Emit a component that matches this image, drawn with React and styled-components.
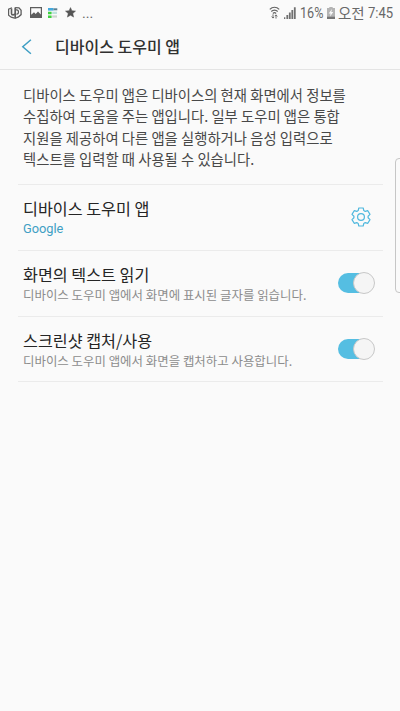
import React from 'react';
import styled, { createGlobalStyle } from 'styled-components'

const GlobalStyle = createGlobalStyle`
*{
    box-sizing:border-box;
}
body{
    margin:0;
    background-color:#fafafa;
    font-family:Roboto, "Noto Sans CJK KR", sans-serif;
}
`
const Screen = styled.div`
position:relative;
height:711px;
overflow:hidden;
background-color:#fafafa;
`
const StatusBar = styled.div`
display:flex;
justify-content:space-between;
height:25px;
padding:0 7px 0 7px;
color:#686868;
svg{
    display:block;
    flex:none;
}
`
const StatusGroup = styled.div`
display:flex;
align-items:center;
height:25px;
`
const StatusText = styled.span`
display:block;
width:${props => props.$width}px;
margin-left:${props => props.$left || 0}px;
font-size:15px;
line-height:26px;
white-space:nowrap;
transform:scaleX(${props => props.$stretch || 1});
transform-origin:left center;
`
const Period = styled(StatusText)`
font-family:"Noto Sans CJK KR", sans-serif;
font-size:14.5px;
line-height:24px;
`
const Gap = styled.span`
width:${props => props.$size}px;
`
const Header = styled.header`
display:flex;
align-items:center;
height:45px;
padding-left:21px;
border-bottom:1px solid #e4e4e4;
`
const BackButton = styled.button`
display:flex;
width:34px;
padding:0;
border:none;
background:none;
`
const HeaderTitle = styled.h1`
margin:0;
padding-bottom:2px;
font-family:"Noto Sans CJK KR", sans-serif;
font-size:16px;
font-weight:500;
line-height:24px;
color:#303030;
`
const Description = styled.p`
margin:0;
padding:14px 0 0 23px;
height:114px;
font-family:"Noto Sans CJK KR", sans-serif;
font-size:14.35px;
line-height:21.3px;
color:#484848;
white-space:nowrap;
`
const List = styled.div`
margin:0 17px 0 18px;
border-top:1px solid #ebebeb;
`
const Row = styled.div`
display:flex;
align-items:center;
justify-content:space-between;
height:${props => props.$height || 66}px;
padding:${props => props.$top || 0}px 9.5px 0 5px;
border-bottom:1px solid #ebebeb;
`
const RowTitle = styled.div`
height:22px;
font-family:"Noto Sans CJK KR", sans-serif;
font-size:16.2px;
line-height:20px;
color:#252525;
`
const RowText = styled.div`
font-family:"Noto Sans CJK KR", sans-serif;
font-size:12.45px;
line-height:18px;
color:#8c8c8c;
white-space:nowrap;
`
const RowValue = styled(RowText)`
font-family:Roboto, sans-serif;
font-size:12.8px;
color:#3f9fc4;
`
const SettingsButton = styled.button`
display:flex;
padding:0 0 1px 0;
margin-right:2.5px;
border:none;
background:none;
`
const Track = styled.div`
display:flex;
justify-content:flex-end;
align-items:center;
width:36px;
height:20px;
margin-bottom:1px;
border-radius:10px;
background-color:#55bee2;
`
const Knob = styled.div`
flex:none;
width:22px;
height:22px;
margin-right:-1px;
border-radius:50%;
border:1px solid #c8c8c8;
background-color:#f5f5f5;
`
const EdgeHandle = styled.div`
position:absolute;
top:158px;
left:395px;
width:12px;
height:135px;
border:1px solid #c6c6c6;
border-radius:4px;
`

const PlusIcon = () => (
    <svg width="16" height="14" viewBox="0 0 16 14" fill="none" stroke="#5d5d5d">
        <path d="M5 1.8 L1.6 3.2 V9.2 L4.2 11.2 L7.6 12.2" strokeWidth="1.2" />
        <path d="M8.2 1.6 L12 1.9 L14.1 4.2 V8.6 L11.5 10.9 L9 12" strokeWidth="1.3" />
        <path d="M4.5 2.6 V7.4 C4.5 9.3 7.6 9.3 7.6 7.4" strokeWidth="1.6" />
        <path d="M8.2 1.5 V12.8" strokeWidth="1.7" />
        <path d="M8.4 3.8 H10 C12 4 12 7.9 10 8.1 H9.4" strokeWidth="1.3" />
    </svg>
)

const PictureIcon = () => (
    <svg width="12" height="11" viewBox="0 0 12 11">
        <path fill="#5d5d5d" fillRule="evenodd" d="M0 0 H12 V11 H0 Z M1.2 1.2 V7.8 L4 5.2 L5.7 7 L8 4.5 L10.8 7.5 V1.2 Z" />
    </svg>
)

const ListIcon = () => (
    <svg width="10" height="10" viewBox="0 0 10 10">
        <path fill="#43a8dc" d="M0 0 H5.5 V2.6 H0 Z" />
        <path fill="#5a7f90" d="M5.5 .3 H9.3 V2.3 H5.5 Z" />
        <path fill="#3fd03f" d="M0 3.7 H3.6 V6.3 H0 Z M0 7.4 H3.6 V10 H0 Z" />
        <path fill="#bfe2dc" d="M4.2 3.7 H9 V6 H4.2 Z" />
        <path fill="#cfd4cf" d="M4.2 7.4 H9 V9.6 H4.2 Z" />
    </svg>
)

const StarIcon = () => (
    <svg width="11" height="11" viewBox="0 0 11 11">
        <path fill="#555" stroke="#555" strokeWidth=".5" d="M5.5 .6 L6.9 3.8 L10.5 4.1 L7.8 6.5 L8.6 10.1 L5.5 8.2 L2.4 10.1 L3.2 6.5 L.5 4.1 L4.1 3.8 Z" />
    </svg>
)

const WifiIcon = () => (
    <svg width="11" height="13" viewBox="0 0 11 13" fill="none" stroke="#636363" strokeWidth="1.2">
        <path d="M.8 3.4 C3.5 .5 7.5 .5 10.2 3.4 M2.3 5.5 C4.1 3.6 6.9 3.6 8.7 5.5 M3.9 7.5 C4.8 6.6 6.2 6.6 7.1 7.5" />
        <path d="M4 8.3 V12 M2.6 10.6 L4 12.1 L5.1 10.9 M7 12.6 V8.9 M5.9 10 L7 8.9 L8.4 10.4" strokeWidth=".9" />
    </svg>
)

const SignalIcon = () => (
    <svg width="12" height="12" viewBox="0 0 12 12" fill="#707070">
        <path d="M0 10.3 H1.3 V12 H0 Z M2.4 8 H4.2 V12 H2.4 Z M4.9 5.5 H6.7 V12 H4.9 Z M7.4 3 H9.2 V12 H7.4 Z M9.9 .3 H11.7 V12 H9.9 Z" />
    </svg>
)

const BatteryIcon = () => (
    <svg width="8" height="12" viewBox="0 0 8 12">
        <path fill="#b4b4b4" d="M2.3 0 H5.7 V1 H8 V10 H0 V1 H2.3 Z" />
        <path fill="#757575" d="M0 9.7 H8 V12 H0 Z" />
        <path fill="#fafafa" d="M5 2 L1.7 6.4 H3.6 L3 9.4 L6.3 5 H4.3 Z" />
    </svg>
)

const BackIcon = () => (
    <svg width="12" height="16" viewBox="0 0 12 16" fill="none" stroke="#3f9fc4" strokeWidth="1.5">
        <path d="M9.9 .8 L1.8 7.8 L9.9 14.8" />
    </svg>
)

const GearIcon = () => (
    <svg width="20" height="20" viewBox="0 0 20 20" fill="none" stroke="#4fb8de" strokeWidth="1.2" strokeLinejoin="round">
        <path d="M7.8 1 H12.2 L12.8 3.6 L14.2 4.4 L16.8 3.7 L19 7.4 L17.1 9.2 V10.8 L19 12.6 L16.8 16.3 L14.2 15.6 L12.8 16.4 L12.2 19 H7.8 L7.2 16.4 L5.8 15.6 L3.2 16.3 L1 12.6 L2.9 10.8 V9.2 L1 7.4 L3.2 3.7 L5.8 4.4 L7.2 3.6 Z" />
        <circle cx="10" cy="10" r="3.4" />
    </svg>
)

const Switch = () => (
    <Track role="switch" aria-checked="true">
        <Knob />
    </Track>
)

class App extends React.Component {
    render() {
        return (
            <Screen>
                <GlobalStyle />
                <StatusBar>
                    <StatusGroup>
                        <PlusIcon />
                        <Gap $size={7} />
                        <PictureIcon />
                        <Gap $size={6} />
                        <ListIcon />
                        <Gap $size={7} />
                        <StarIcon />
                        <StatusText $left={6} $width={14} $stretch={0.95}>...</StatusText>
                    </StatusGroup>
                    <StatusGroup>
                        <WifiIcon />
                        <Gap $size={4} />
                        <SignalIcon />
                        <StatusText $left={4} $width={24} $stretch={0.84}>16%</StatusText>
                        <Gap $size={3} />
                        <BatteryIcon />
                        <Period $left={3} $width={27}>오전</Period>
                        <StatusText $left={3} $width={25} $stretch={0.87}>7:45</StatusText>
                    </StatusGroup>
                </StatusBar>

                <Header>
                    <BackButton><BackIcon /></BackButton>
                    <HeaderTitle>디바이스 도우미 앱</HeaderTitle>
                </Header>

                <Description>
                    디바이스 도우미 앱은 디바이스의 현재 화면에서 정보를<br />
                    수집하여 도움을 주는 앱입니다. 일부 도우미 앱은 통합<br />
                    지원을 제공하여 다른 앱을 실행하거나 음성 입력으로<br />
                    텍스트를 입력할 때 사용될 수 있습니다.
                </Description>

                <List>
                    <Row>
                        <div>
                            <RowTitle>디바이스 도우미 앱</RowTitle>
                            <RowValue>Google</RowValue>
                        </div>
                        <SettingsButton><GearIcon /></SettingsButton>
                    </Row>
                    <Row>
                        <div>
                            <RowTitle>화면의 텍스트 읽기</RowTitle>
                            <RowText>디바이스 도우미 앱에서 화면에 표시된 글자를 읽습니다.</RowText>
                        </div>
                        <Switch />
                    </Row>
                    <Row $height={65} $top={1}>
                        <div>
                            <RowTitle>스크린샷 캡처/사용</RowTitle>
                            <RowText>디바이스 도우미 앱에서 화면을 캡처하고 사용합니다.</RowText>
                        </div>
                        <Switch />
                    </Row>
                </List>
                <EdgeHandle />
            </Screen>
        );
    }
}

export default App;
